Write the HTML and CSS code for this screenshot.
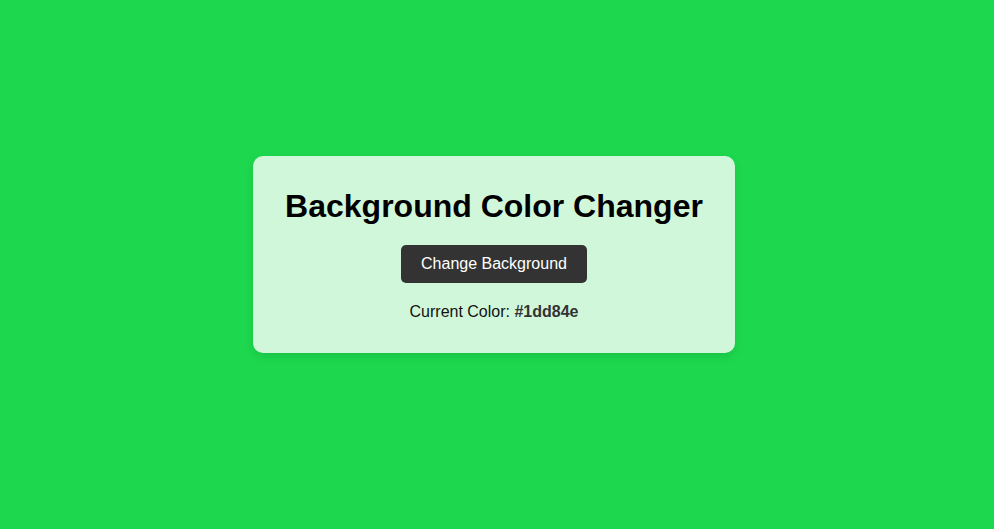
FILE: index.html
```html
<!DOCTYPE html>
<html>
<head>
<meta charset="utf-8">
<link rel="stylesheet" href="styles.css">
</head>
<body>
<div class="card">
  <h1 class="title">Background Color Changer</h1>
  <button class="btn">Change Background</button>
  <p class="current">Current Color: <strong class="hex">#1dd84e</strong></p>
</div>
</body>
</html>
```
FILE: styles.css
```css
html, body { margin: 0; }
body {
  box-sizing: border-box;
  min-height: 100vh;
  background: #1dd84e;
  font-family: "Liberation Sans", Arial, sans-serif;
  display: flex;
  align-items: center;
  justify-content: center;
  padding: 0 6px 20px 0;
}
.card {
  background: rgba(255, 255, 255, 0.8);
  border-radius: 10px;
  padding: 32px;
  box-shadow: 0 4px 10px rgba(0, 0, 0, 0.1);
  text-align: center;
  width: 418px;
}
.title {
  margin: 0 0 20px;
  font-size: 32px;
  font-weight: bold;
  color: #000;
}
.btn {
  font-family: inherit;
  font-size: 16px;
  line-height: 18px;
  padding: 10px 20px;
  background: #333;
  color: #fff;
  border: none;
  border-radius: 5px;
  cursor: pointer;
}
.current {
  margin: 20px 0 0;
  font-size: 16px;
  color: #111;
}
.hex { color: #333; }
```
